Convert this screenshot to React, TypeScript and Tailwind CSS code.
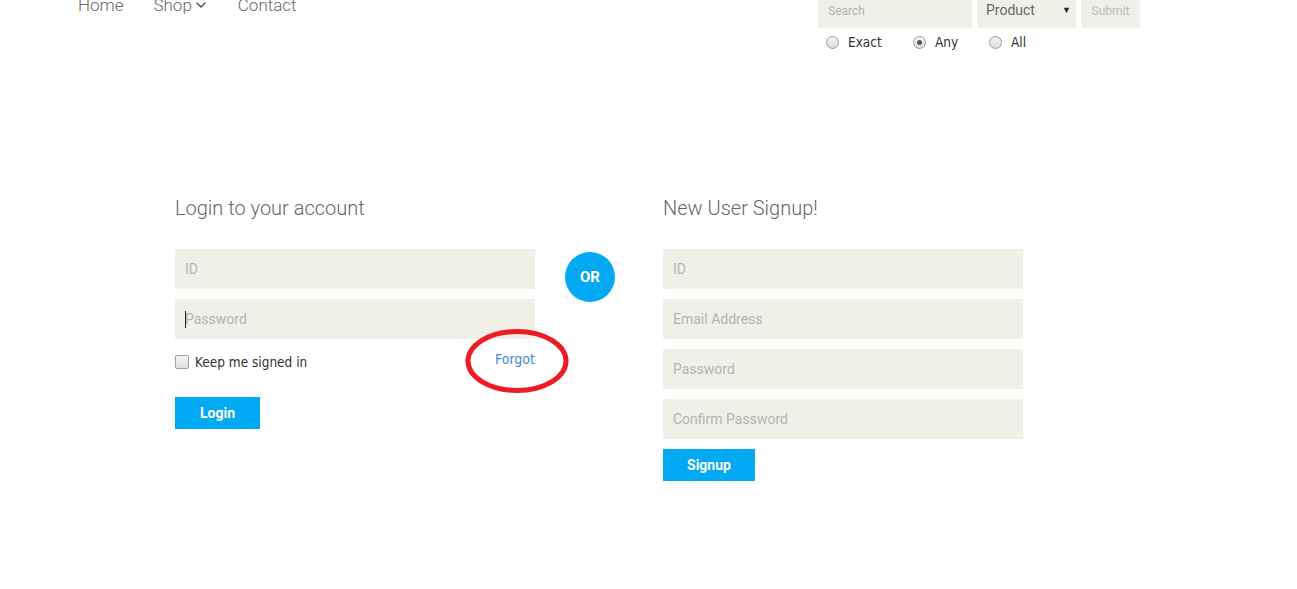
import { ChevronDown } from "lucide-react";

const roboto = "font-['Roboto',sans-serif]";
const tahoma = "font-['DejaVu_Sans_Condensed','DejaVu_Sans',sans-serif]";

function Radio({ label, checked, width }: { label: string; checked?: boolean; width: string }) {
  return (
    <label className={`flex items-center ${width}`}>
      <span className="flex h-[13px] w-[13px] items-center justify-center rounded-full border border-[#9a9a9a] bg-gradient-to-b from-[#f4f4f4] to-[#dcdcdc]">
        {checked && <span className="h-[5px] w-[5px] rounded-full bg-[#555]" />}
      </span>
      <span className={`ml-[9px] text-[13.5px] text-[#333] ${tahoma}`}>{label}</span>
    </label>
  );
}

function Header() {
  return (
    <div className="flex h-[60px]">
      <nav className={`ml-[78px] -mt-[3px] flex h-[17px] text-[17px] leading-[17px] font-light text-[#696763] ${roboto}`}>
        <a className="mr-[30px]">Home</a>
        <a className="mr-[29px] flex items-start">
          Shop
          <ChevronDown className="ml-[1px] h-[16px] w-[16px] text-[#555]" strokeWidth={2.2} />
        </a>
        <a>Contact</a>
      </nav>
      <div className="ml-auto mr-[157px] flex flex-col">
        <div className={`flex gap-[5px] ${roboto}`}>
          <div className="h-[28px] w-[154px] bg-[#f0f0e9] pl-[10px] pt-[2px] text-[12px] text-[#b3b3b3]">Search</div>
          <div className="flex h-[28px] w-[99px] items-center justify-between bg-[#f0f0e9] pl-[9px] pr-[5px] text-[14px] text-[#696763]">
            <span className="-mt-[8px]">Product</span>
            <span className="-mt-[6px] text-[9px] text-[#222]">▼</span>
          </div>
          <div className="h-[28px] w-[59px] bg-[#f0f0e9] pt-[2px] text-center text-[12px] text-[#b8b8b8]">Submit</div>
        </div>
        <div className="mt-[4px] flex pl-[8px]">
          <Radio label="Exact" width="w-[87px]" />
          <Radio label="Any" checked width="w-[76px]" />
          <Radio label="All" width="w-[60px]" />
        </div>
      </div>
    </div>
  );
}

function Field({ placeholder, caret }: { placeholder: string; caret?: boolean }) {
  return (
    <div className="relative">
      <input
        placeholder={placeholder}
        className={`block h-[40px] w-[360px] bg-[#f0f0e9] px-[10px] text-[14px] text-[#696763] outline-none placeholder:text-[#b4b4b4] ${roboto}`}
      />
      {caret && <span className="absolute left-[10px] top-[12px] h-[17px] w-[1px] bg-[#222]" />}
    </div>
  );
}

export default function App() {
  return (
    <div className="h-[589px] w-full overflow-hidden bg-white">
      <Header />
      <div className="mt-[136px] flex pl-[175px]">
        <div className="w-[360px]">
          <h2 className={`h-[24px] text-[20px] leading-[24px] font-light text-[#696763] ${roboto}`}>Login to your account</h2>
          <div className="mt-[29px] flex flex-col gap-[10px]">
            <Field placeholder="ID" />
            <Field placeholder="Password" caret />
          </div>
          <div className="relative mt-[16px] flex h-[14px] items-center">
            <span className="h-[14px] w-[14px] rounded-[2px] border border-[#a0a0a0] bg-gradient-to-b from-[#f6f6f6] to-[#dedede]" />
            <span className={`ml-[6px] text-[13.5px] text-[#333] ${tahoma}`}>Keep me signed in</span>
            <a className={`ml-auto -mt-[6px] text-[14px] text-[#428bca] ${tahoma}`}>Forgot</a>
            <svg className="absolute left-[289px] top-[-27px] h-[66px] w-[106px]" viewBox="0 0 106 66">
              <ellipse cx="53" cy="33" rx="49" ry="29.5" fill="none" stroke="#ed1c24" strokeWidth="5" />
            </svg>
          </div>
          <button className={`mt-[28px] h-[32px] w-[85px] bg-[#03a9f2] text-[14px] font-bold text-white ${roboto}`}>Login</button>
        </div>
        <div className="w-[128px] pl-[30px] pt-[56px]">
          <div className={`flex h-[50px] w-[50px] items-center justify-center rounded-full bg-[#03a9f2] text-[15px] font-bold text-white ${roboto}`}>OR</div>
        </div>
        <div className="w-[360px]">
          <h2 className={`h-[24px] text-[20px] leading-[24px] font-light text-[#696763] ${roboto}`}>New User Signup!</h2>
          <div className="mt-[29px] flex flex-col gap-[10px]">
            <Field placeholder="ID" />
            <Field placeholder="Email Address" />
            <Field placeholder="Password" />
            <Field placeholder="Confirm Password" />
          </div>
          <button className={`mt-[10px] h-[32px] w-[92px] bg-[#03a9f2] text-[14px] font-bold text-white ${roboto}`}>Signup</button>
        </div>
      </div>
    </div>
  );
}
